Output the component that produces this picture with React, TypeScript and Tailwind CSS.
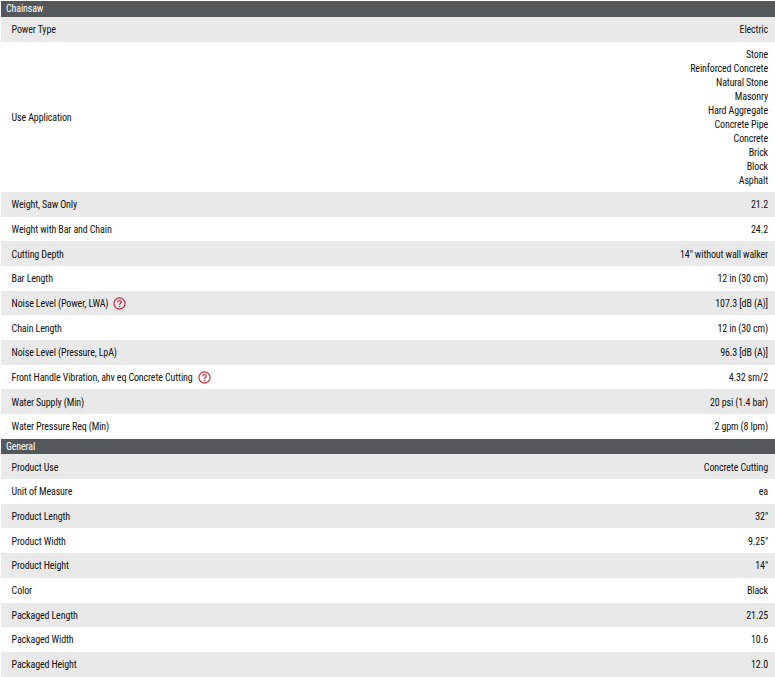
const Help = () => (
  <svg width="13" height="13" viewBox="0 0 13 13" className="ml-[5px] shrink-0" fill="none">
    <circle cx="6.5" cy="6.5" r="5.6" stroke="#c4202f" strokeWidth="1.1" />
    <path d="M4.7 5.2C4.7 4.1 5.5 3.5 6.5 3.5C7.5 3.5 8.3 4.1 8.3 5C8.3 6.2 6.6 6.2 6.6 7.7" stroke="#c4202f" strokeWidth="1.2" />
    <rect x="6" y="8.7" width="1.2" height="1.2" fill="#c4202f" />
  </svg>
);

type Row = { label: string; value: string | string[]; help?: boolean };

const chainsaw: Row[] = [
  { label: "Power Type", value: "Electric" },
  {
    label: "Use Application",
    value: ["Stone", "Reinforced Concrete", "Natural Stone", "Masonry", "Hard Aggregate", "Concrete Pipe", "Concrete", "Brick", "Block", "Asphalt"],
  },
  { label: "Weight, Saw Only", value: "21.2" },
  { label: "Weight with Bar and Chain", value: "24.2" },
  { label: "Cutting Depth", value: '14" without wall walker' },
  { label: "Bar Length", value: "12 in (30 cm)" },
  { label: "Noise Level (Power, LWA)", value: "107.3 [dB (A)]", help: true },
  { label: "Chain Length", value: "12 in (30 cm)" },
  { label: "Noise Level (Pressure, LpA)", value: "96.3 [dB (A)]" },
  { label: "Front Handle Vibration, ahv eq Concrete Cutting", value: "4.32 sm/2", help: true },
  { label: "Water Supply (Min)", value: "20 psi (1.4 bar)" },
  { label: "Water Pressure Req (Min)", value: "2 gpm (8 lpm)" },
];

const general: Row[] = [
  { label: "Product Use", value: "Concrete Cutting" },
  { label: "Unit of Measure", value: "ea" },
  { label: "Product Length", value: '32"' },
  { label: "Product Width", value: '9.25"' },
  { label: "Product Height", value: '14"' },
  { label: "Color", value: "Black" },
  { label: "Packaged Length", value: "21.25" },
  { label: "Packaged Width", value: "10.6" },
  { label: "Packaged Height", value: "12.0" },
];

const Section = ({ title, rows }: { title: string; rows: Row[] }) => (
  <section>
    <div className="h-[15.8px] bg-[#55585a] pl-[5px] text-[10px] leading-[15px] text-white">{title}</div>
    {rows.map((r, i) => (
      <div
        key={r.label}
        className={`flex min-h-[24.68px] items-center justify-between pl-[10.6px] pr-[7px] pt-[1.8px] ${i % 2 === 0 ? "bg-[#e9e9e9]" : "bg-white"}`}
      >
        <div className="flex items-center">
          {r.label}
          {r.help && <Help />}
        </div>
        {Array.isArray(r.value) ? (
          <div className="pb-[3.5px] pt-[5px] text-right leading-[14px]">
            {r.value.map((v) => (
              <div key={v}>{v}</div>
            ))}
          </div>
        ) : (
          <div className="text-right">{r.value}</div>
        )}
      </div>
    ))}
  </section>
);

export default function App() {
  return (
    <div className="bg-white pl-px pt-[1.2px] font-['Roboto',sans-serif] text-[10px] leading-[14px] tracking-[-0.13px] text-[#111] [font-stretch:80%]">
      <Section title="Chainsaw" rows={chainsaw} />
      <Section title="General" rows={general} />
    </div>
  );
}
